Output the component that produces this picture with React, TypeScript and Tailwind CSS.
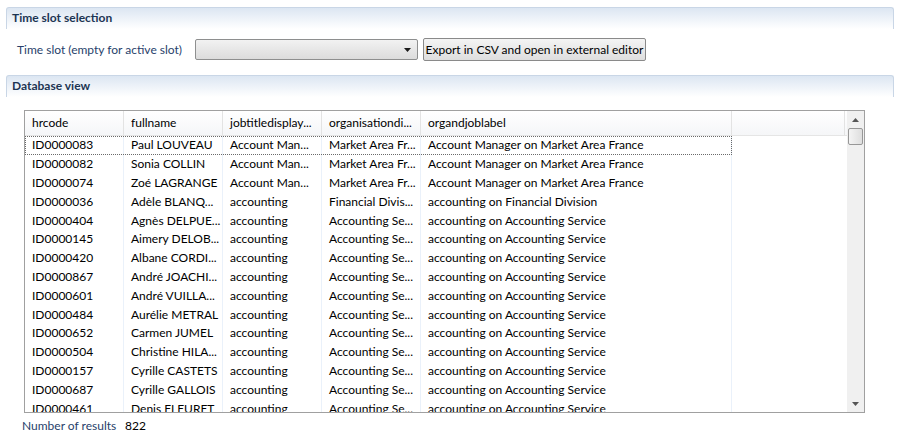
import React from "react";

const rows: string[][] = [
  ["ID0000083", "Paul LOUVEAU", "Account Man...", "Market Area Fr...", "Account Manager on Market Area France"],
  ["ID0000082", "Sonia COLLIN", "Account Man...", "Market Area Fr...", "Account Manager on Market Area France"],
  ["ID0000074", "Zoé LAGRANGE", "Account Man...", "Market Area Fr...", "Account Manager on Market Area France"],
  ["ID0000036", "Adèle BLANQ...", "accounting", "Financial Divis...", "accounting on Financial Division"],
  ["ID0000404", "Agnès DELPUE...", "accounting", "Accounting Se...", "accounting on Accounting Service"],
  ["ID0000145", "Aimery DELOB...", "accounting", "Accounting Se...", "accounting on Accounting Service"],
  ["ID0000420", "Albane CORDI...", "accounting", "Accounting Se...", "accounting on Accounting Service"],
  ["ID0000867", "André JOACHI...", "accounting", "Accounting Se...", "accounting on Accounting Service"],
  ["ID0000601", "André VUILLA...", "accounting", "Accounting Se...", "accounting on Accounting Service"],
  ["ID0000484", "Aurélie METRAL", "accounting", "Accounting Se...", "accounting on Accounting Service"],
  ["ID0000652", "Carmen JUMEL", "accounting", "Accounting Se...", "accounting on Accounting Service"],
  ["ID0000504", "Christine HILA...", "accounting", "Accounting Se...", "accounting on Accounting Service"],
  ["ID0000157", "Cyrille CASTETS", "accounting", "Accounting Se...", "accounting on Accounting Service"],
  ["ID0000687", "Cyrille GALLOIS", "accounting", "Accounting Se...", "accounting on Accounting Service"],
  ["ID0000461", "Denis FLEURET", "accounting", "Accounting Se...", "accounting on Accounting Service"],
];

const headers = ["hrcode", "fullname", "jobtitledisplay...", "organisationdi...", "organdjoblabel", ""];
const widths = ["w-[99px]", "w-[99px]", "w-[99px]", "w-[99px]", "w-[311px]", "w-[113px]"];

function SectionHeader({ title }: { title: string }) {
  return (
    <div className="mx-[6px] h-[22px] rounded-t-[3px] border-x border-t border-[#c9d6e6] bg-gradient-to-b from-[#dce6f2] to-[#ffffff] pl-[5px] text-[12px] font-bold leading-[20px] text-[#1c3553]">
      {title}
    </div>
  );
}

export default function App() {
  return (
    <div className="h-[441px] w-[900px] bg-white pt-[7px] text-[12px]" style={{ fontFamily: "Lato, 'Open Sans', sans-serif" }}>
      <SectionHeader title="Time slot selection" />

      <div className="mt-[9px] flex items-center pl-[17px]">
        <span className="w-[178px] text-[#283f6b]">Time slot (empty for active slot)</span>
        <div className="flex h-[21px] w-[223px] items-center justify-end rounded-[2px] border border-[#8e8f8f] bg-gradient-to-b from-[#f2f2f2] to-[#dcdcdc] pr-[6px]">
          <svg width="7" height="4" viewBox="0 0 7 4">
            <path d="M0 0h7L3.5 4z" fill="#1a1a1a" />
          </svg>
        </div>
        <button className="ml-[5px] h-[23px] w-[223px] rounded-[2px] border border-[#8a8a8a] bg-gradient-to-b from-[#f4f4f4] to-[#dedede] text-[12px] text-black">
          Export in CSV and open in external editor
        </button>
      </div>

      <div className="mt-[14px]">
        <SectionHeader title="Database view" />
      </div>

      <div className="ml-[24px] mt-[13px] flex h-[303px] w-[841px] border border-[#a0a0a0] bg-white">
        <div className="flex min-w-0 flex-1 flex-col">
          <div className="flex h-[25px] shrink-0 border-b border-[#e5e5e5] bg-gradient-to-b from-white to-[#f5f6f8]">
            {headers.map((h, i) => (
              <div key={i} className={`${widths[i]} flex shrink-0 items-center border-r border-[#e3e3e3] pl-[7px] text-black`}>
                {h}
              </div>
            ))}
          </div>
          <div className="relative flex-1 overflow-hidden">
            <div className="pointer-events-none absolute inset-0 flex">
              {widths.slice(0, 5).map((w, i) => (
                <div key={i} className={`${w} shrink-0 border-r border-[#eaf1fa]`} />
              ))}
            </div>
            {rows.map((r, ri) => (
              <div
                key={ri}
                className={`relative flex h-[18.8px] items-center ${ri === 0 ? "w-[707px] border border-dotted border-[#6a6a6a]" : "border border-transparent"}`}
              >
                {r.map((c, ci) => (
                  <div key={ci} className={`${widths[ci]} shrink-0 whitespace-nowrap pl-[6px] text-black`}>
                    {c}
                  </div>
                ))}
              </div>
            ))}
          </div>
        </div>
        <div className="flex w-[17px] shrink-0 flex-col items-center bg-[#f0f0f0]">
          <div className="flex h-[17px] items-center justify-center">
            <svg width="7" height="4" viewBox="0 0 7 4">
              <path d="M3.5 0L7 4H0z" fill="#555" />
            </svg>
          </div>
          <div className="h-[17px] w-[15px] rounded-[2px] border border-[#979797] bg-gradient-to-r from-[#f4f4f4] to-[#dedede]" />
          <div className="flex-1" />
          <div className="flex h-[17px] items-center justify-center">
            <svg width="7" height="4" viewBox="0 0 7 4">
              <path d="M0 0h7L3.5 4z" fill="#555" />
            </svg>
          </div>
        </div>
      </div>

      <div className="mt-[4px] flex pl-[22px] text-[#283f6b]">
        <span className="w-[103px]">Number of results</span>
        <span className="text-black">822</span>
      </div>
    </div>
  );
}
